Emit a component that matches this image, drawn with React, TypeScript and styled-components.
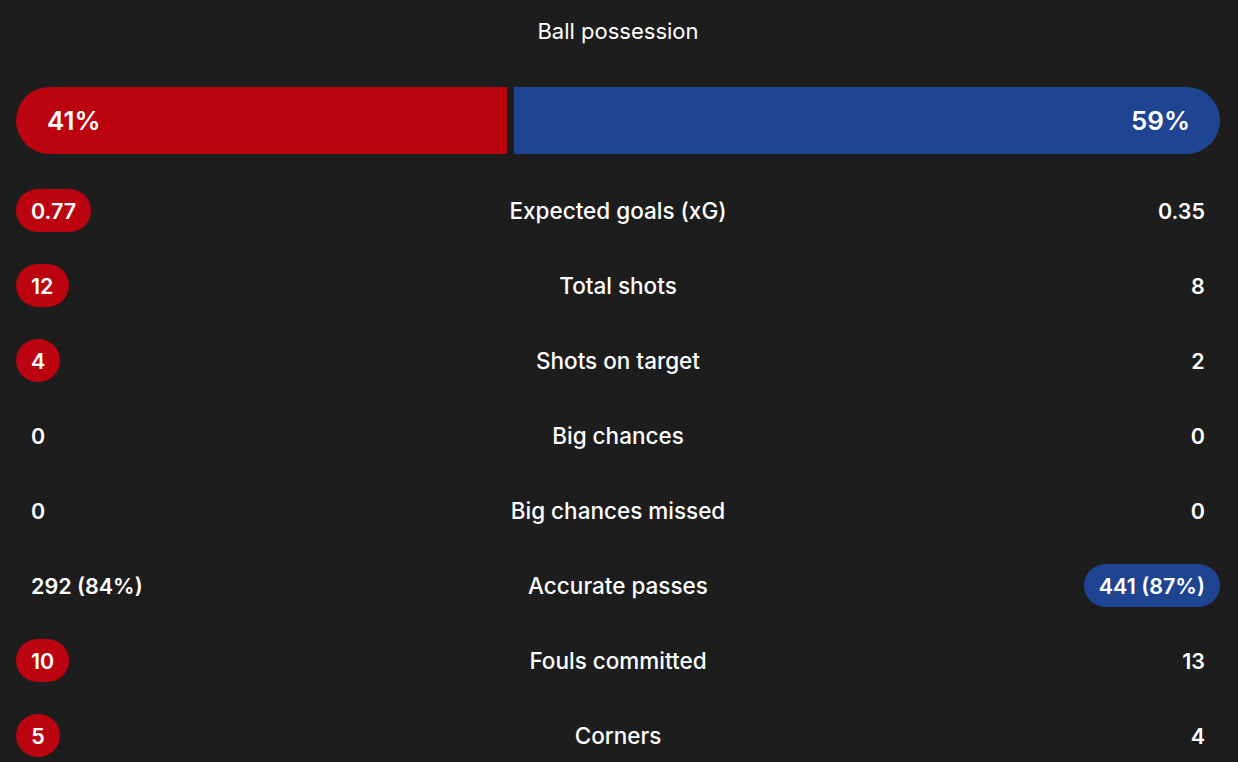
import styled, { createGlobalStyle } from "styled-components";

const GlobalStyle = createGlobalStyle`
  html, body {
    margin: 0;
    padding: 0;
    background: #1d1d1d;
  }
  body {
    font-family: Inter, "Noto Sans", sans-serif;
    color: #ffffff;
  }
`;

const HOME = "#bb040f";
const AWAY = "#1f4592";

const Page = styled.div`
  width: 1238px;
  height: 762px;
  overflow: hidden;
  padding: 0 18px 0 16px;
  box-sizing: border-box;
`;

const Title = styled.div`
  height: 63px;
  line-height: 63px;
  text-align: center;
  font-size: 22px;
  font-weight: 400;
`;

const Bar = styled.div`
  margin-top: 24px;
  height: 67px;
  display: flex;
  gap: 7px;
`;

const Segment = styled.div<{ $side: "home" | "away" }>`
  flex-basis: 0;
  min-width: 0;
  display: flex;
  align-items: center;
  justify-content: ${(p) => (p.$side === "home" ? "flex-start" : "flex-end")};
  background: ${(p) => (p.$side === "home" ? HOME : AWAY)};
  border-radius: ${(p) => (p.$side === "home" ? "34px 0 0 34px" : "0 34px 34px 0")};
`;

const Pct = styled.span`
  margin: 0 30px 0 31px;
  font-size: 26px;
  font-weight: 600;
`;

const Rows = styled.div`
  margin-top: 19px;
`;

const Row = styled.div`
  height: 75px;
  display: grid;
  grid-template-columns: 1fr auto 1fr;
  align-items: center;
`;

const Label = styled.div`
  text-align: center;
  font-size: 22.5px;
  font-weight: 500;
`;

const Cell = styled.div<{ $side: "home" | "away" }>`
  display: flex;
  justify-content: ${(p) => (p.$side === "home" ? "flex-start" : "flex-end")};
`;

const Value = styled.span<{ $side: "home" | "away"; $win: boolean }>`
  display: inline-flex;
  align-items: center;
  justify-content: center;
  height: 43px;
  min-width: 44px;
  box-sizing: border-box;
  padding: 0 15px;
  border-radius: 22px;
  font-size: 21.5px;
  font-weight: 600;
  background: ${(p) => (p.$win ? (p.$side === "home" ? HOME : AWAY) : "transparent")};
`;

type Stat = { label: string; home: string; away: string; win?: "home" | "away" };

const stats: Stat[] = [
  { label: "Expected goals (xG)", home: "0.77", away: "0.35", win: "home" },
  { label: "Total shots", home: "12", away: "8", win: "home" },
  { label: "Shots on target", home: "4", away: "2", win: "home" },
  { label: "Big chances", home: "0", away: "0" },
  { label: "Big chances missed", home: "0", away: "0" },
  { label: "Accurate passes", home: "292 (84%)", away: "441 (87%)", win: "away" },
  { label: "Fouls committed", home: "10", away: "13", win: "home" },
  { label: "Corners", home: "5", away: "4", win: "home" },
];

export default function App() {
  const home = 41;
  const away = 59;
  return (
    <>
      <GlobalStyle />
      <Page>
        <Title>Ball possession</Title>
        <Bar>
          <Segment $side="home" style={{ flexGrow: home }}>
            <Pct>{home}%</Pct>
          </Segment>
          <Segment $side="away" style={{ flexGrow: away }}>
            <Pct>{away}%</Pct>
          </Segment>
        </Bar>
        <Rows>
          {stats.map((s) => (
            <Row key={s.label}>
              <Cell $side="home">
                <Value $side="home" $win={s.win === "home"}>{s.home}</Value>
              </Cell>
              <Label>{s.label}</Label>
              <Cell $side="away">
                <Value $side="away" $win={s.win === "away"}>{s.away}</Value>
              </Cell>
            </Row>
          ))}
        </Rows>
      </Page>
    </>
  );
}
